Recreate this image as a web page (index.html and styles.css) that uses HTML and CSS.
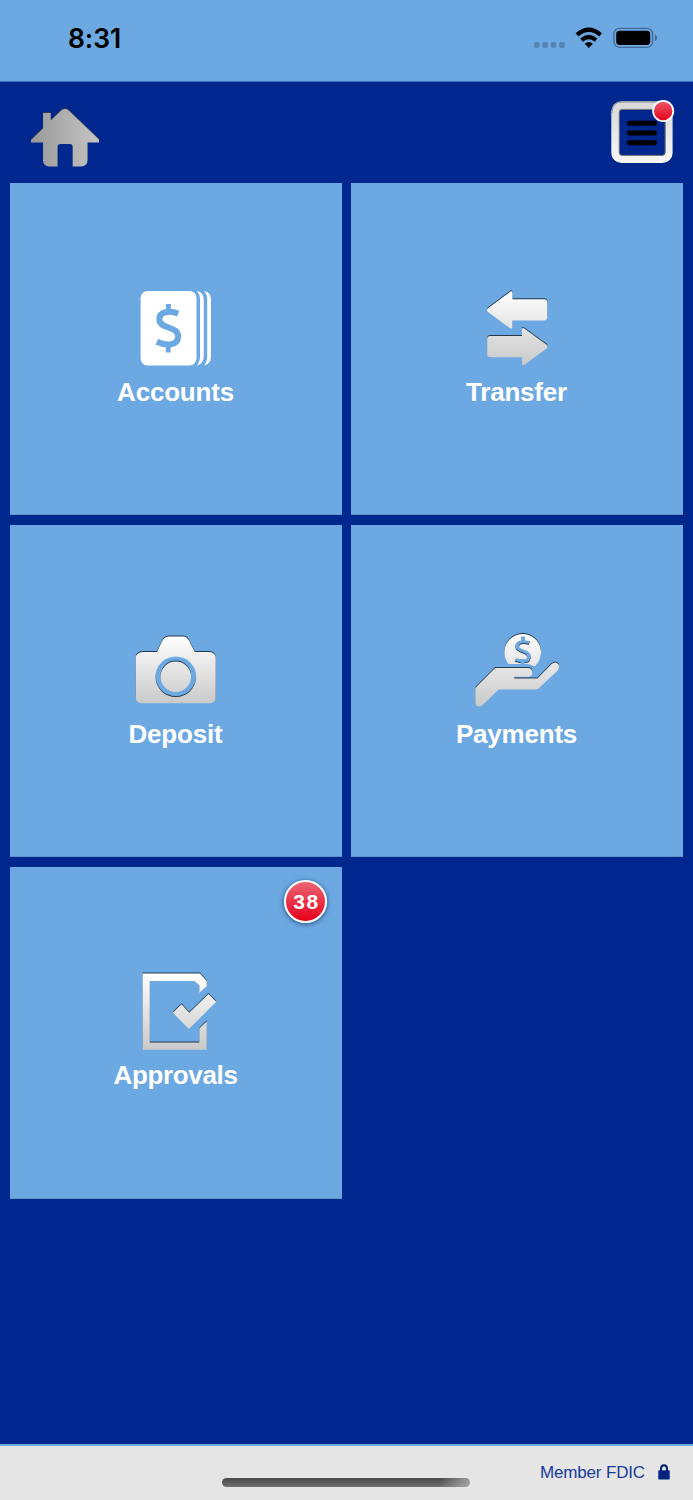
FILE: index.html
```html
<!DOCTYPE html>
<html lang="en">
<head>
<meta charset="utf-8">
<title>Mobile Banking</title>
<link rel="stylesheet" href="styles.css">
</head>
<body>
<div class="screen">
  <header class="status">
    <span class="time">8:31</span>
    <svg class="status-icons" width="126" height="24" viewBox="532 26 126 24">
      <g fill="#5484b3"><rect x="534" y="42" width="5.5" height="5.8" rx="1.5"/><rect x="542.4" y="42" width="5.5" height="5.8" rx="1.5"/><rect x="550.8" y="42" width="5.5" height="5.8" rx="1.5"/><rect x="559.2" y="42" width="5.5" height="5.8" rx="1.5"/></g>
      <g fill="none" stroke="#000" stroke-width="4.3"><path d="M577 34.8Q588.8 24.8 600.6 34.8"/><path d="M581.6 40.2Q588.8 34 596 40.2"/></g>
      <path d="M584.7 43.7Q588.8 40.2 592.9 43.7L588.8 48Z"/>
      <rect x="613.9" y="28.4" width="38.7" height="18.9" rx="5.6" fill="none" stroke="#426a92" stroke-width="1.3"/>
      <rect x="616.2" y="30.8" width="34" height="14.2" rx="3.4"/>
      <path d="M655 34.6Q657 35.4 657 37.9Q657 40.3 655 41.1Z" fill="#426a92"/>
    </svg>
  </header>
  <nav class="topbar">
    <svg class="home" width="70" height="62" viewBox="30 107 70 62">
      <defs><linearGradient id="hg"><stop offset="0" stop-color="#999"/><stop offset="1" stop-color="#c4c4c4"/></linearGradient></defs>
      <path fill="url(#hg)" d="M31 142.5V140L43 128.5V113H50.7V120.5L61.5 110.2Q65 107.6 68.5 110.2L99 139.5V142.5H87.5V160.5Q87.5 163 85.7 164.7Q84 166.5 81.5 166.5H72.7V147Q72.7 144 69.7 144H60.5Q57.5 144 57.5 147V166.5H49Q46.5 166.5 44.8 164.7Q43 163 43 160.5V142.5Z"/>
    </svg>
    <svg class="menu" width="66" height="66" viewBox="610 99 66 66">
      <defs>
        <linearGradient id="mg" x2="0" y2="1"><stop stop-color="#d8d8d8"/><stop offset="1" stop-color="#f7f7f7"/></linearGradient>
        <linearGradient id="rg" x2="0" y2="1"><stop stop-color="#ec5869"/><stop offset="1" stop-color="#e6001b"/></linearGradient>
      </defs>
      <rect x="611.3" y="101.3" width="61.3" height="61.6" rx="10" fill="url(#mg)"/>
      <path d="M612 113Q612 102 622 102H661" fill="none" stroke="#929292" stroke-width="1"/>
      <rect x="619.2" y="109.4" width="46" height="46" rx="3" fill="#00278d" stroke="#777"/>
      <path d="M629.2 123.3H654.7M629.2 133H654.7M629.2 142.7H654.7" stroke="#000" stroke-width="4.9" stroke-linecap="round"/>
      <circle cx="663.2" cy="111" r="10.1" fill="url(#rg)" stroke="#fff" stroke-width="1.8"/>
    </svg>
  </nav>
  <main class="tiles">
    <a class="tile">
      <svg width="100" height="90" viewBox="126 283 100 90">
        <rect x="140.6" y="291" width="55.9" height="74.5" rx="7" fill="#fff"/>
        <path fill="#fff" d="M196.7 291Q203.8 292 203.8 300V356Q203.8 364 196.7 365.7Q200 362 200 356V300Q200 294 196.7 291ZM204 291Q211 292 211 300V356Q211 364 204 365.7Q207.2 362 207.2 356V300Q207.2 294 204 291Z"/>
        <path d="M168.5 304V311M168.2 345V352.5" fill="none" stroke="#6ca8e2" stroke-width="4.8"/>
        <path d="M178.2 313.6C170 310.3 159.3 311.3 159.3 319.3C159.3 329.5 178.1 325.5 178.1 336.3C178.1 346.3 165.5 346 156.9 341.8" fill="none" stroke="#6ca8e2" stroke-width="6"/>
      </svg>
      <span class="label">Accounts</span>
    </a>
    <a class="tile">
      <svg width="100" height="90" viewBox="467 283 100 90">
        <defs><linearGradient id="g2" gradientUnits="userSpaceOnUse" x1="0" y1="290" x2="0" y2="365"><stop stop-color="#fff"/><stop offset="1" stop-color="#c9c9c9"/></linearGradient></defs>
        <path class="bevel" fill="url(#g2)" d="M487.6 308.5L509.5 292.2Q512.5 290 512.5 293.4V299.2H544Q547.4 299.2 547.4 302.6V317Q547.4 320.4 544 320.4H512.5V326.4Q512.5 330 509.5 327.7L487.6 311.8Q486.4 310.2 487.6 308.5ZM490.5 336H522V329.4Q522 326.8 525 329L547 345Q548.2 346.8 547 348.2L525 364.4Q522 366.5 522 363V357.3H490.5Q487.1 357.3 487.1 354V339.4Q487.1 336 490.5 336Z"/>
      </svg>
      <span class="label">Transfer</span>
    </a>
    <a class="tile">
      <svg width="100" height="90" viewBox="126 625 100 90">
        <defs><linearGradient id="g3" gradientUnits="userSpaceOnUse" x1="0" y1="636" x2="0" y2="704"><stop stop-color="#fff"/><stop offset="1" stop-color="#c9c9c9"/></linearGradient></defs>
        <path class="bevel" fill="url(#g3)" fill-rule="evenodd" d="M143 652H157L162 641.3Q164.4 636.6 169 636.6H183Q187.2 636.6 189.4 641.3L194.8 652H209Q215.7 652 215.7 658.5V697Q215.7 703.3 209 703.3H143Q135.7 703.3 135.7 697V658.5Q135.7 652 143 652ZM175.8 656.5A20.3 20.3 0 1 0 175.8 697.1A20.3 20.3 0 1 0 175.8 656.5ZM175.8 661.5A15.3 15.3 0 1 1 175.8 692.1A15.3 15.3 0 1 1 175.8 661.5Z"/>
      </svg>
      <span class="label">Deposit</span>
    </a>
    <a class="tile">
      <svg width="100" height="90" viewBox="467.4 625 100 90">
        <defs>
          <linearGradient id="g4" gradientUnits="userSpaceOnUse" x1="0" y1="632" x2="0" y2="707"><stop stop-color="#fff"/><stop offset="1" stop-color="#c9c9c9"/></linearGradient>
          <mask id="coin" maskUnits="userSpaceOnUse" x="500" y="625" width="48" height="46"><rect x="500" y="625" width="48" height="46" fill="#fff"/><path d="M523.5 636.5V642M522.8 659V665M529.8 643.3C524 641 517.6 642 517.6 646.5C517.6 652.5 529.3 650.3 529.3 656.7C529.3 663.2 521.5 662 515.7 659.8" fill="none" stroke="#000" stroke-width="3.9"/></mask>
        </defs>
        <g class="bevel"><path mask="url(#coin)" fill="url(#g4)" d="M508.5 663.4A18.3 18.3 0 1 1 537.7 663.4L535.6 666H533.5Q531.5 664 527 664H509Z"/></g>
        <path class="bevel" fill="url(#g4)" d="M495.5 668H528Q532.8 668.2 532.8 672.4Q532.8 676.5 528 676.8H514.7V678.4H537.8L552 664Q556 660.7 559 664.5Q560.5 667.5 557.6 671L539.5 688Q538 689.5 535.5 689.5H499L483.3 704.8Q480 708 476.7 705.5Q475.6 704.3 475.6 702V688Z"/>
      </svg>
      <span class="label">Payments</span>
    </a>
    <a class="tile last">
      <svg width="100" height="90" viewBox="126 966 100 90">
        <defs><linearGradient id="g5" gradientUnits="userSpaceOnUse" x1="0" y1="973" x2="0" y2="1050"><stop stop-color="#fff"/><stop offset="1" stop-color="#c9c9c9"/></linearGradient></defs>
        <path class="bevel" fill="url(#g5)" d="M142.5 973.5H200L206.8 981V986.3L199.3 992.8V985.5L194.5 981H149.8V1042.6H199.3V1028.5L206.8 1021.2V1049.7H142.5ZM172.8 1012.8L181.6 1004.3L189.2 1012.8L208.5 994L216.3 1001.7L188.9 1029Z"/>
      </svg>
      <span class="label">Approvals</span>
      <span class="badge">38</span>
    </a>
  </main>
  <footer class="footer">
    <span class="home-indicator"></span>
    <span class="fdic">Member FDIC</span>
    <svg width="12" height="17" viewBox="0 0 12 17"><path d="M3 8V4.7Q3 1.2 6 1.2T9 4.7V8" fill="none" stroke="#001f70" stroke-width="2"/><rect x=".3" y="6.2" width="11.4" height="9.3" rx=".7" fill="#00237e"/></svg>
  </footer>
</div>
</body>
</html>
```
FILE: styles.css
```css
* { box-sizing: border-box; }
body { margin: 0; font-family: "Liberation Sans", Arial, sans-serif; }
.screen { display: flex; flex-direction: column; width: 693px; height: 1500px; background: #00278d; }
.status { display: flex; justify-content: space-between; height: 82px; padding: 26px 35px 0 68px; background: #6ca8e2; border-bottom: 1px solid #3a70bd; }
.time { font: 600 26.5px/25px Inter, sans-serif; letter-spacing: -0.1px; }
.topbar { display: flex; justify-content: space-between; height: 101px; padding: 17px 17px 0 30px; }
.home { margin-top: 8px; filter: drop-shadow(0 -0.6px 0 #343950); }
.tiles { display: grid; grid-template-columns: 332px 332px; grid-auto-rows: 332.2px; gap: 9.6px 9px; padding: 0 10px; }
.tile { position: relative; display: flex; flex-direction: column; align-items: center; padding-top: 100px; background: #6ca8e2; border-bottom: 1px solid #5a94c9; }
.tile.last { padding-top: 99.4px; }
.tile svg { flex: none; }
.label { margin-right: 1px; color: #fff; font-size: 26px; font-weight: bold; line-height: 38px; letter-spacing: -0.2px; }
.last .label { letter-spacing: -0.35px; }
.bevel { filter: drop-shadow(0 -1px 0 #26384b); }
.badge { position: absolute; top: 13px; right: 15px; width: 43px; height: 43px; border: 2px solid #fff; border-radius: 50%; background: linear-gradient(#ed6575, #e60019); box-shadow: 0 1px 5px #234c75; color: #fff; font: bold 21px/39px "Liberation Sans", Arial, sans-serif; letter-spacing: 1.6px; text-align: center; padding-left: 2px; }
.footer { position: relative; display: flex; justify-content: flex-end; align-items: flex-start; gap: 13px; height: 56px; margin-top: auto; padding: 18px 23px 0 0; background: #e5e5e5; border-top: 2px solid #6ca8e2; }
.fdic { color: #183b9d; font-size: 17px; line-height: 17px; letter-spacing: -0.15px; }
.home-indicator { position: absolute; left: 222px; top: 32px; width: 248px; height: 9px; border-radius: 5px; background: linear-gradient(90deg, transparent 88%, rgba(180,180,180,.8)), linear-gradient(#484848, #707070); }
```
